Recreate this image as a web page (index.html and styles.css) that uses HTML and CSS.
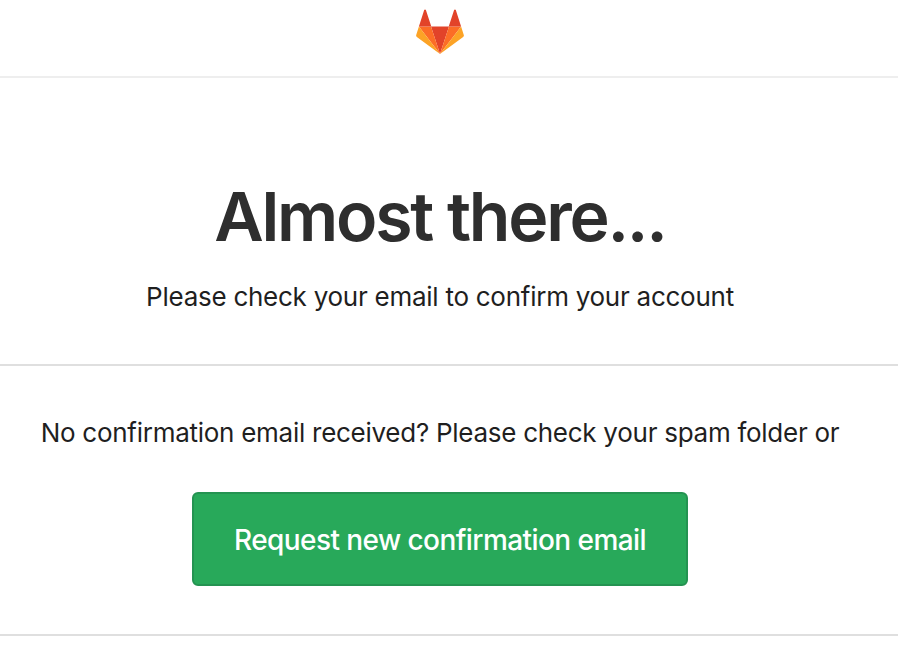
FILE: index.html
```html
<!DOCTYPE html>
<html lang="en">
<head>
<meta charset="utf-8">
<title>Almost there</title>
<link rel="stylesheet" href="styles.css">
</head>
<body>
<header class="navbar">
<svg class="logo" viewBox="0 0 48 45" aria-label="GitLab">
<path fill="#e24329" d="M24 45 15 17.600h18z"/>
<path fill="#fc6d26" d="M24 45 15 17.600H2.900zM24 45l9-27.400h12.100z"/>
<path fill="#fca326" d="M2.900 17.600.2 25.900c-.25.75 0 1.550.65 2L24 45zM45.100 17.600l2.700 8.300c.25.75 0 1.550-.65 2L24 45z"/>
<path fill="#e24329" d="M2.900 17.600h12.400L9.900 1.100c-.27-.84-1.450-.84-1.720 0zM45.100 17.600H32.700l5.400-16.500c.27-.84 1.450-.84 1.720 0z"/>
</svg>
</header>
<main>
<section class="intro">
<h1>Almost there...</h1>
<p class="lead">Please check your email to confirm your account</p>
</section>
<section class="resend">
<p class="hint">No confirmation email received? Please check your spam folder or</p>
<a class="button"><span>Request new confirmation email</span></a>
</section>
</main>
</body>
</html>
```
FILE: styles.css
```css
* { box-sizing: border-box; }
body { margin: 0; background: #fff; color: #1f1f1f; font-family: Inter, sans-serif; overflow: hidden; }
h1, p { margin: 0; white-space: nowrap; }
.navbar { height: 78px; padding: 9px 18px 0 0; border-bottom: 2px solid #eee; display: flex; justify-content: center; align-items: flex-start; }
.logo { width: 48px; height: 45px; display: block; }
.intro, .resend { display: flex; flex-direction: column; align-items: center; padding-right: 18px; }
.intro { height: 288px; padding-top: 98px; border-bottom: 2px solid #dfdfdf; }
h1 { font-size: 68px; line-height: 80px; font-weight: 600; letter-spacing: -2.25px; color: #2e2e2e; }
.lead { margin-top: 25px; font-size: 26px; line-height: 32px; letter-spacing: -0.26px; }
.resend { height: 270px; padding-top: 51px; border-bottom: 2px solid #dfdfdf; }
.hint { font-size: 26px; line-height: 32px; letter-spacing: -0.27px; }
.button { margin-top: 43px; width: 496px; height: 94px; padding-top: 2px; display: flex; align-items: center; justify-content: center; background: #28a95a; border: 2px solid #249351; border-radius: 6px; color: #fff; font-size: 28px; font-weight: 500; letter-spacing: -0.57px; white-space: nowrap; }
```
